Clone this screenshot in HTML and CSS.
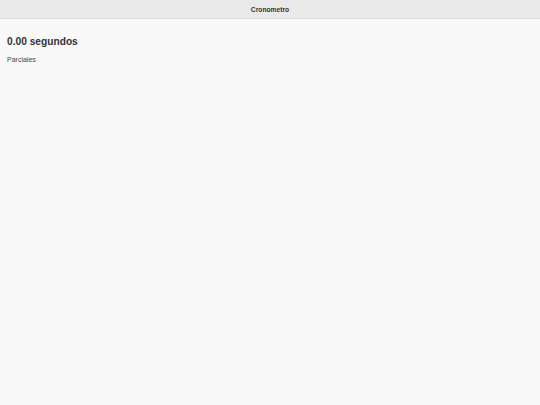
FILE: index.html
```html
<!DOCTYPE html>
<html lang="es">
<head>
<meta charset="utf-8">
<title>Cronometro</title>
<link rel="stylesheet" href="styles.css">
</head>
<body>
<header class="bar"><h1 class="bar-title">Cronometro</h1></header>
<main class="content">
<h2 class="time">0.00 segundos</h2>
<p class="label">Parciales</p>
</main>
</body>
</html>
```
FILE: styles.css
```css
html, body {
  margin: 0;
  padding: 0;
  background: #f9f9f9;
  font-family: "Liberation Sans", Arial, sans-serif;
  color: #333;
}
.bar {
  height: 18px;
  background: #e9e9e9;
  border-bottom: 1px solid #dcdcdc;
  display: flex;
  align-items: center;
  justify-content: center;
}
.bar-title {
  margin: 0;
  font-size: 6.7px;
  font-weight: bold;
  color: #333;
}
.content {
  padding: 17px 7px;
}
.time {
  margin: 0;
  font-size: 10.2px;
  line-height: 12px;
  font-weight: bold;
  color: #333;
}
.label {
  margin: 7px 0 0;
  font-size: 7px;
  line-height: 9px;
  color: #444;
}
```
